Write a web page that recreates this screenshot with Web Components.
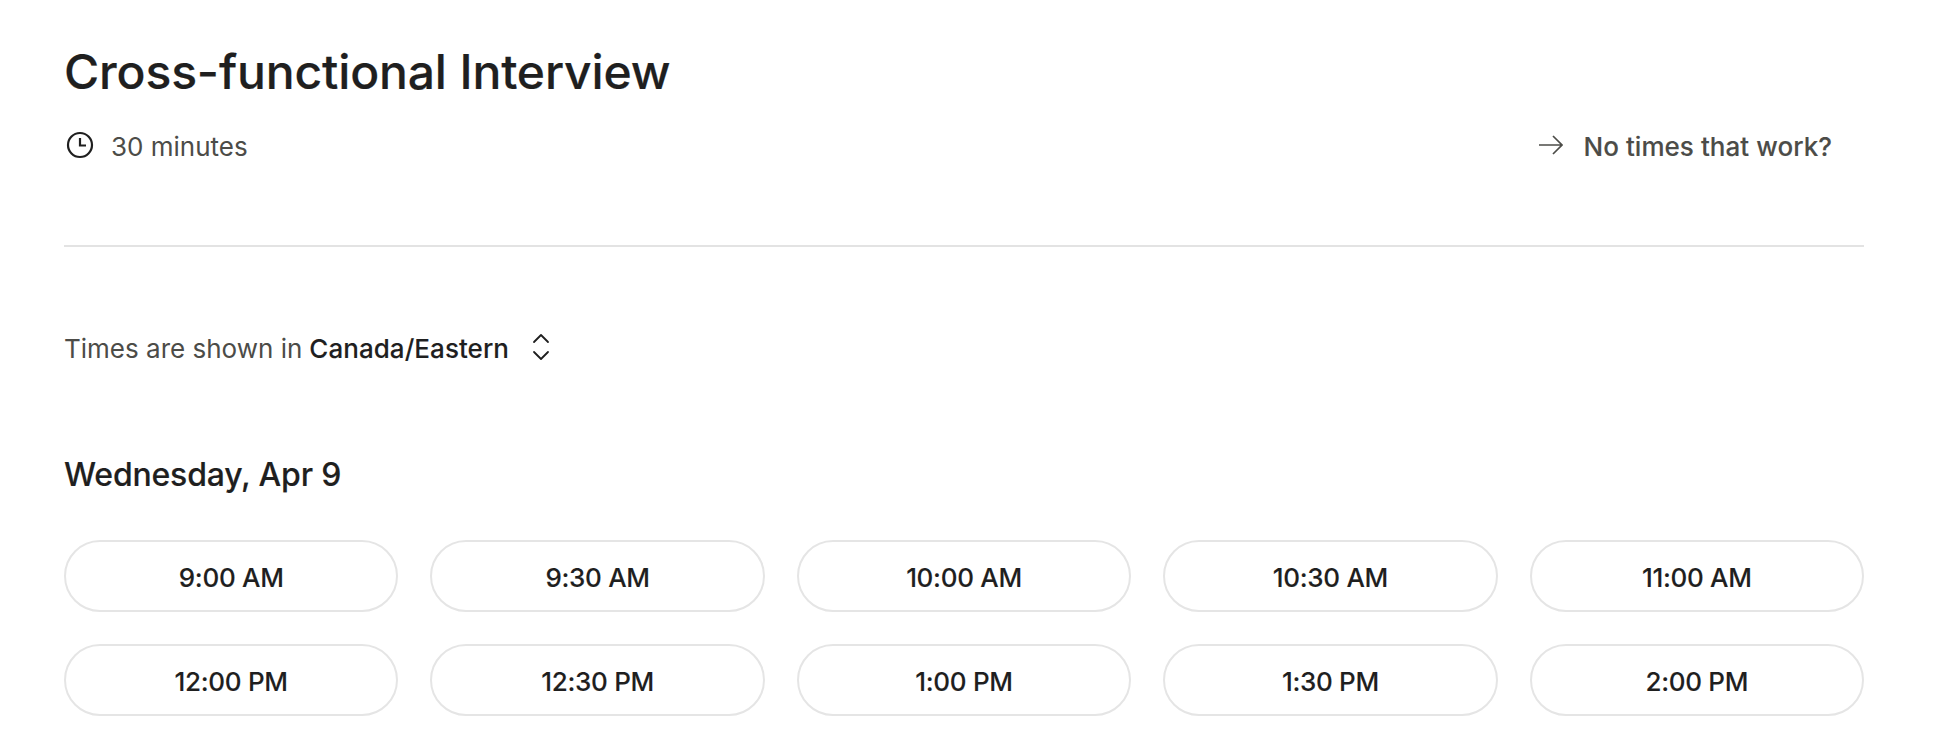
<!DOCTYPE html>
<html lang="en">
<head>
  <meta charset="UTF-8">
  <title>Cross-functional Interview</title>
  <style>
    body { margin: 0; background: #fff; font-family: Inter, "Liberation Sans", sans-serif; }
  </style>
</head>
<body>
  <schedule-page>
    <event-header title="Cross-functional Interview" duration="30 minutes" link="No times that work?"></event-header>
    <timezone-row zone="Canada/Eastern"></timezone-row>
    <day-slots day="Wednesday, Apr 9">
      <time-slot>9:00 AM</time-slot>
      <time-slot>9:30 AM</time-slot>
      <time-slot>10:00 AM</time-slot>
      <time-slot>10:30 AM</time-slot>
      <time-slot>11:00 AM</time-slot>
      <time-slot>12:00 PM</time-slot>
      <time-slot>12:30 PM</time-slot>
      <time-slot>1:00 PM</time-slot>
      <time-slot>1:30 PM</time-slot>
      <time-slot>2:00 PM</time-slot>
    </day-slots>
  </schedule-page>

  <script>
    class SchedulePage extends HTMLElement {
      constructor() {
        super();
        this.attachShadow({ mode: 'open' });
        this.shadowRoot.innerHTML = `
          <style>
            :host { display: block; padding: 44px 82px 0 64px; color: #1f1f1f; }
          </style>
          <slot></slot>
        `;
      }
    }

    class EventHeader extends HTMLElement {
      constructor() {
        super();
        this.attachShadow({ mode: 'open' });
        this.shadowRoot.innerHTML = `
          <style>
            :host { display: block; border-bottom: 2px solid #e3e3e3; height: 201px; }
            h1 { margin: 0; font-size: 48px; line-height: 56px; font-weight: 500; letter-spacing: -0.14px; -webkit-text-stroke: 0.2px #1f1f1f; color: #1f1f1f; }
            .row { display: flex; align-items: center; justify-content: space-between; margin-top: 30px; height: 32px; }
            .item { display: flex; align-items: center; font-size: 26px; color: #4c4c48; }
            .link { font-weight: 500; letter-spacing: 0.05px; padding-right: 32px; -webkit-text-stroke: 0.1px #4c4c48; }
            svg { display: block; fill: none; stroke-linejoin: miter; }
            .clock { margin: 0 16px 2px 1px; stroke: #1f1f1f; stroke-width: 2.2; }
            .arrow { margin: 0 20px 2px 0; stroke: #4c4c48; stroke-width: 1.7; }
          </style>
          <h1></h1>
          <div class="row">
            <div class="item">
              <svg class="clock" width="30" height="30" viewBox="0 0 30 30"><circle cx="15" cy="15" r="12"/><path d="M15 8V15.5H21"/></svg>
              <span id="duration"></span>
            </div>
            <div class="item link">
              <svg class="arrow" width="25" height="22" viewBox="0 0 25 22"><path d="M1 11H24M15 2L24 11L15 20"/></svg>
              <span id="link"></span>
            </div>
          </div>
        `;
        this.shadowRoot.querySelector('h1').textContent = this.getAttribute('title');
        this.shadowRoot.getElementById('duration').textContent = this.getAttribute('duration');
        this.shadowRoot.getElementById('link').textContent = this.getAttribute('link');
      }
    }

    class TimezoneRow extends HTMLElement {
      constructor() {
        super();
        this.attachShadow({ mode: 'open' });
        this.shadowRoot.innerHTML = `
          <style>
            :host { display: flex; align-items: center; height: 32px; margin-top: 85px; font-size: 26px; color: #4c4c48; }
            b { font-weight: 500; letter-spacing: 0.05px; -webkit-text-stroke: 0.1px #1f1f1f; color: #1f1f1f; margin-left: 7px; }
            svg { display: block; margin: 0 0 3px 22px; fill: none; stroke: #1f1f1f; stroke-width: 1.8; stroke-linecap: round; stroke-linejoin: round; }
          </style>
          <span>Times are shown in</span>
          <b></b>
          <svg width="20" height="30" viewBox="0 0 20 30"><path d="M3 10L10 3L17 10M3 20L10 27L17 20"/></svg>
        `;
        this.shadowRoot.querySelector('b').textContent = this.getAttribute('zone');
      }
    }

    class DaySlots extends HTMLElement {
      constructor() {
        super();
        this.attachShadow({ mode: 'open' });
        this.shadowRoot.innerHTML = `
          <style>
            :host { display: block; margin-top: 91px; }
            h2 { margin: 0 0 45px; font-size: 32px; line-height: 40px; font-weight: 500; letter-spacing: -0.2px; -webkit-text-stroke: 0.15px #1f1f1f; color: #1f1f1f; }
            .grid { display: grid; grid-template-columns: repeat(5, 1fr); gap: 32px; }
          </style>
          <h2></h2>
          <div class="grid"><slot></slot></div>
        `;
        this.shadowRoot.querySelector('h2').textContent = this.getAttribute('day');
      }
    }

    class TimeSlot extends HTMLElement {
      constructor() {
        super();
        this.attachShadow({ mode: 'open' });
        this.shadowRoot.innerHTML = `
          <style>
            :host { display: flex; align-items: center; justify-content: center; box-sizing: border-box; height: 72px; padding-top: 2px; border: 2px solid #e5e5e5; border-radius: 36px; font-size: 26px; font-weight: 500; letter-spacing: -0.3px; -webkit-text-stroke: 0.1px #1f1f1f; color: #1f1f1f; }
          </style>
          <slot></slot>
        `;
      }
    }

    customElements.define('schedule-page', SchedulePage);
    customElements.define('event-header', EventHeader);
    customElements.define('timezone-row', TimezoneRow);
    customElements.define('day-slots', DaySlots);
    customElements.define('time-slot', TimeSlot);
  </script>
</body>
</html>
